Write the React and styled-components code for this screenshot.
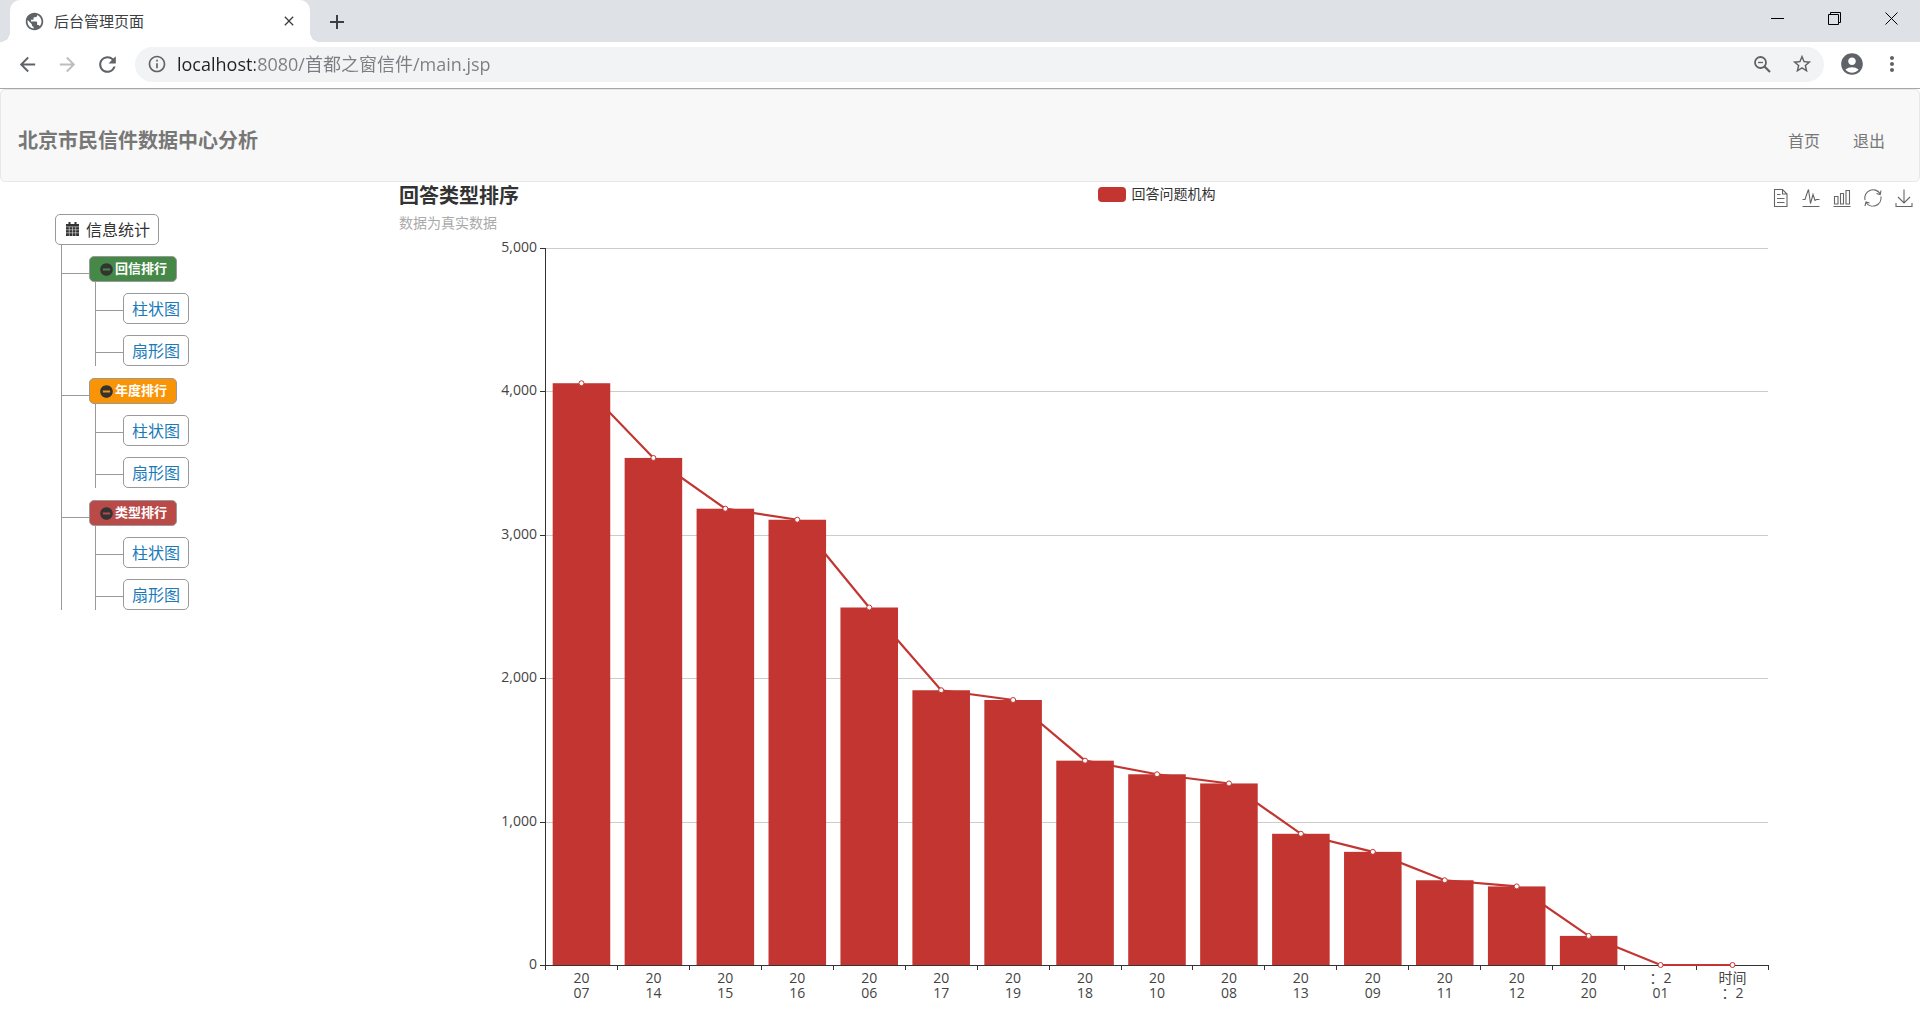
import React, { useEffect, useRef, useState } from 'react';
import styled, { createGlobalStyle } from 'styled-components';
import { FaMinusCircle } from 'react-icons/fa';
import {
  MdArrowBack,
  MdArrowForward,
  MdRefresh,
  MdInfoOutline,
  MdStarBorder,
  MdAccountCircle,
  MdMoreVert,
  MdPublic,
  MdClose,
  MdAdd,
} from 'react-icons/md';

const GlobalStyle = createGlobalStyle`
  * {
    box-sizing: border-box;
  }
  body {
    margin: 0;
    background: #fff;
    color: #333;
    font-family: "Open Sans", "Noto Sans CJK SC", sans-serif;
    font-size: 16px;
  }
  button {
    padding: 0;
    border: 0;
    background: none;
    color: inherit;
    font: inherit;
    cursor: pointer;
  }
`;

const TabStrip = styled.div`
  display: flex;
  align-items: flex-end;
  height: 42px;
  padding-left: 10px;
  background: #dee1e6;
`;

const Tab = styled.div`
  position: relative;
  display: flex;
  align-items: center;
  width: 300px;
  height: 42px;
  padding: 0 13px 0 14px;
  border-radius: 10px 10px 0 0;
  background: #fff;
  color: #3c4043;
  font-size: 15px;

  &::before,
  &::after {
    content: '';
    position: absolute;
    bottom: 0;
    width: 10px;
    height: 10px;
  }
  &::before {
    left: -10px;
    background: radial-gradient(circle at 0 0, transparent 10px, #fff 10px);
  }
  &::after {
    right: -10px;
    background: radial-gradient(circle at 100% 0, transparent 10px, #fff 10px);
  }
`;

const TabTitle = styled.span`
  flex: 1;
  margin-left: 9px;
  padding-bottom: 2px;
`;

const IconButton = styled.button`
  display: flex;
  align-items: center;
  justify-content: center;
  width: ${props => props.$width || 40}px;
  height: 40px;
  color: ${props => props.$color || '#5f6368'};
`;

const WindowButtons = styled.div`
  display: flex;
  align-items: center;
  height: 42px;
  margin-left: auto;
  padding-bottom: 6px;
`;

const Toolbar = styled.div`
  display: flex;
  align-items: center;
  height: 47px;
  padding: 0 8px 2px 7px;
  border-bottom: 1px solid #a6a6a6;
  background: #fff;
`;

const AddressBar = styled.div`
  display: flex;
  flex: 1;
  align-items: center;
  height: 35px;
  margin: 0 8px;
  padding: 0 2px 0 12px;
  border-radius: 18px;
  background: #f1f3f4;
  color: #5f6368;
`;

/* host part is darker than the rest of the address */
const AddressInput = styled.input`
  flex: 1;
  min-width: 0;
  margin-left: 10px;
  padding: 0 0 2px;
  border: 0;
  outline: 0;
  background: linear-gradient(90deg, #202124 78px, #7a7e83 78px);
  background-clip: text;
  -webkit-background-clip: text;
  color: transparent;
  font-family: inherit;
  font-size: 18px;
`;

const Navbar = styled.nav`
  display: flex;
  align-items: center;
  justify-content: space-between;
  height: 93px;
  padding: 8px 34px 0 17px;
  border: 1px solid #e7e7e7;
  border-radius: 5px;
  background: #f8f8f8;
  color: #777;
`;

const Brand = styled.a`
  color: inherit;
  font-size: 20px;
  font-weight: bold;
  text-decoration: none;
`;

const NavLinks = styled.div`
  display: flex;
  gap: 33px;
`;

const NavLink = styled.a`
  color: inherit;
  text-decoration: none;
`;

const Content = styled.main`
  display: grid;
  grid-template-columns: 399px 1fr;
`;

const Sidebar = styled.aside`
  padding: 32px 0 0 55px;
`;

const TreeRoot = styled.button`
  display: flex;
  align-items: center;
  gap: 7px;
  height: 31px;
  padding: 0 8px 2px 10px;
  border: 1px solid #999;
  border-radius: 5px;
`;

const Branch = styled.ul`
  margin: 0 0 0 ${props => props.$indent}px;
  padding: 11px 0 0;
  border-left: 1px solid #999;
  list-style: none;
`;

const Group = styled.li`
  &:not(:last-child) {
    margin-bottom: 12px;
  }
`;

const Row = styled.div`
  display: flex;
  align-items: center;

  &::before {
    content: '';
    width: 27px;
    border-top: 1px solid #999;
    margin-top: ${props => props.$drop}px;
  }
`;

const GroupLabel = styled.button`
  display: flex;
  align-items: center;
  height: 26px;
  padding: 0 9px 0 10px;
  border: 1px solid #999;
  border-radius: 5px;
  background: ${props => props.$color};
  color: #fff;
  font-size: 13px;
  font-weight: bold;

  svg {
    margin-right: 2px;
    color: #333;
  }

  span {
    padding-bottom: 3px;
  }
`;

const Leaf = styled.li`
  padding-bottom: 11px;

  &:last-child {
    padding-bottom: 0;
  }
`;

const LeafLink = styled.a`
  display: flex;
  align-items: center;
  height: 31px;
  padding: 0 8px 2px;
  border: 1px solid #999;
  border-radius: 5px;
  color: #1b7bb9;
  text-decoration: none;
`;

const Panel = styled.section`
  min-width: 0;
`;

const ChartHeader = styled.header`
  display: grid;
  grid-template-columns: 1fr auto 1fr;
  height: 50px;
  padding-right: 6px;
`;

const ChartTitle = styled.h2`
  margin: 0;
  color: #333;
  font-size: 20px;
  line-height: 28px;
`;

const Subtitle = styled.p`
  margin: 0;
  color: #aaa;
  font-size: 14px;
  line-height: 26px;
`;

const Legend = styled.button`
  display: flex;
  align-items: center;
  gap: 6px;
  height: 24px;
  color: #333;
  font-size: 14px;

  span:last-child {
    padding-bottom: 3px;
  }
`;

const Swatch = styled.span`
  width: 28px;
  height: 15px;
  border-radius: 4px;
  background: #c23531;
`;

const Toolbox = styled.div`
  display: flex;
  justify-content: flex-end;
  gap: 11px;
  height: 32px;
`;

const ToolButton = styled.button`
  display: flex;
  align-items: center;
  width: 20px;
`;

const ToolIcon = styled.svg`
  width: 20px;
  height: 20px;
  fill: none;
  stroke: #666;
  stroke-width: 1.1;
`;

const Plot = styled.svg`
  display: block;
  width: 100%;
  height: 778px;
  font-size: 14px;
`;

const groups = [
  { name: '回信排行', color: '#468847' },
  { name: '年度排行', color: '#f89406' },
  { name: '类型排行', color: '#b94a48' },
];

const data = [
  { label: ['20', '07'], value: 4057 },
  { label: ['20', '14'], value: 3536 },
  { label: ['20', '15'], value: 3182 },
  { label: ['20', '16'], value: 3105 },
  { label: ['20', '06'], value: 2493 },
  { label: ['20', '17'], value: 1916 },
  { label: ['20', '19'], value: 1848 },
  { label: ['20', '18'], value: 1425 },
  { label: ['20', '10'], value: 1330 },
  { label: ['20', '08'], value: 1266 },
  { label: ['20', '13'], value: 915 },
  { label: ['20', '09'], value: 789 },
  { label: ['20', '11'], value: 591 },
  { label: ['20', '12'], value: 548 },
  { label: ['20', '20'], value: 203 },
  { label: ['：2', '01'], value: 0 },
  { label: ['时间', '：2'], value: 0 },
];

const tools = [
  { name: '数据视图', path: 'M4.5 1.5H12.5L17 6V18.5H4.5ZM12.5 1.5V6H17M7 6.5H10.5M7 10.5H14.5M7 14.5H14.5' },
  { name: '切换为折线图', path: 'M1.5 11.5H4L6 5.5L7.5 1.5L9.5 15.5L12 6.5L14 12.5L15.5 11.5H18.5M1.5 18.5H18.5' },
  { name: '切换为柱状图', path: 'M2.5 8.5H6V16H2.5ZM8.5 5.5H11.5V16H8.5ZM14 2.5H17.5V16H14ZM1.5 18.5H18.5' },
  { name: '还原', path: 'M2 12A8.3 8.3 0 0 1 17 5.5M18 2.5L17.2 6.5L13.5 5.5M18 8.5A8.3 8.3 0 0 1 3 14.5M2 18L3 14L6.5 15' },
  { name: '保存为图片', path: 'M10 1.5V14.5M4 9L10 15L16 9M2 15V18.5H18V15' },
];

const TOP = 16;
const BASE = 733;
const MAX = 5000;

function Chart() {
  const ref = useRef(null);
  const [width, setWidth] = useState(1521);

  useEffect(() => {
    const observer = new ResizeObserver(([entry]) => setWidth(entry.contentRect.width));
    observer.observe(ref.current);
    return () => observer.disconnect();
  }, []);

  const left = 146;
  const right = width - 152;
  const band = (right - left) / data.length;
  const x = i => left + band * (i + 0.5) + 0.5;
  const y = value => BASE - (value / MAX) * (BASE - TOP);

  return (
    <Plot ref={ref} role="img" aria-label="回答类型排序">
      {[0, 1000, 2000, 3000, 4000, 5000].map(tick => (
        <g key={tick}>
          {tick > 0 && <path d={`M${left} ${Math.round(y(tick)) + 0.5}H${right}`} stroke="#ccc" />}
          <path d={`M${left - 5} ${Math.round(y(tick)) + 0.5}H${left}`} stroke="#333" />
          <text x={left - 8} y={y(tick) + 4} textAnchor="end" fill="#444">
            {tick.toLocaleString('en-US')}
          </text>
        </g>
      ))}
      {data.map((d, i) => (
        <rect key={i} x={x(i) - band * 0.4} y={y(d.value)} width={band * 0.8} height={BASE - y(d.value)} fill="#c23531" />
      ))}
      <path d={`M${left + 0.5} ${TOP}V${BASE + 5}M${left} ${BASE + 0.5}H${right}`} stroke="#333" fill="none" />
      {data.map((d, i) => (
        <g key={i}>
          <path d={`M${Math.round(left + band * (i + 1)) + 0.5} ${BASE}v5`} stroke="#333" />
          <text textAnchor="middle" fill="#444">
            <tspan x={x(i)} y={BASE + 18}>{d.label[0]}</tspan>
            <tspan x={x(i)} y={BASE + 33}>{d.label[1]}</tspan>
          </text>
        </g>
      ))}
      <polyline points={data.map((d, i) => `${x(i)},${y(d.value)}`).join(' ')} fill="none" stroke="#c23531" strokeWidth="2.2" />
      {data.map((d, i) => (
        <circle key={i} cx={x(i)} cy={y(d.value)} r="2.5" fill="#fff" stroke="#c23531" />
      ))}
    </Plot>
  );
}

function Browser() {
  return (
    <header>
      <TabStrip>
        <Tab>
          <MdPublic size={21} color="#5f6368" />
          <TabTitle>后台管理页面</TabTitle>
          <IconButton $width={16} $color="#3c4043" aria-label="关闭标签页">
            <MdClose size={18} />
          </IconButton>
        </Tab>
        <IconButton $width={54} $color="#3c4043" aria-label="新标签页">
          <MdAdd size={24} />
        </IconButton>
        <WindowButtons>
          <IconButton $width={57} $color="#000" aria-label="最小化">
            <svg width="13" height="13" stroke="currentColor"><path d="M0 6.5H13" /></svg>
          </IconButton>
          <IconButton $width={57} $color="#000" aria-label="还原窗口">
            <svg width="13" height="13" fill="none" stroke="currentColor"><path d="M.5 2.5H10.5V12.5H.5ZM2.5 2.5V.5H12.5V10.5H10.5" /></svg>
          </IconButton>
          <IconButton $width={57} $color="#000" aria-label="关闭">
            <svg width="13" height="13" stroke="currentColor"><path d="M.5 .5L12.5 12.5M12.5 .5L.5 12.5" /></svg>
          </IconButton>
        </WindowButtons>
      </TabStrip>
      <Toolbar>
        <IconButton aria-label="后退"><MdArrowBack size={23} /></IconButton>
        <IconButton $color="#bbbdbf" aria-label="前进"><MdArrowForward size={23} /></IconButton>
        <IconButton aria-label="刷新"><MdRefresh size={25} /></IconButton>
        <AddressBar>
          <MdInfoOutline size={20} />
          <AddressInput aria-label="地址" defaultValue="localhost:8080/首都之窗信件/main.jsp" />
          <IconButton aria-label="缩放">
            <svg width="17" height="17" fill="none" stroke="currentColor">
              <circle cx="6.5" cy="6.5" r="5.5" strokeWidth="1.8" />
              <path d="M10.5 10.5L16 16" strokeWidth="2.2" />
              <path d="M4 6.5H9" strokeWidth="1.3" />
            </svg>
          </IconButton>
          <IconButton aria-label="收藏"><MdStarBorder size={22} /></IconButton>
        </AddressBar>
        <IconButton aria-label="用户"><MdAccountCircle size={26} /></IconButton>
        <IconButton aria-label="菜单"><MdMoreVert size={24} /></IconButton>
      </Toolbar>
    </header>
  );
}

export default function App() {
  return (
    <>
      <GlobalStyle />
      <Browser />
      <Navbar>
        <Brand href="#">北京市民信件数据中心分析</Brand>
        <NavLinks>
          <NavLink href="#">首页</NavLink>
          <NavLink href="#">退出</NavLink>
        </NavLinks>
      </Navbar>
      <Content>
        <Sidebar>
          <TreeRoot>
            <svg width="13" height="14" stroke="#fff" strokeWidth="0.5">
              <path d="M0 2H2.5V0H4.5V2H8.5V0H10.5V2H13V14H0Z" fill="#333" stroke="none" />
              <path d="M0 4.8H13M0 7.8H13M0 10.8H13M3.3 5V14M6.5 5V14M9.7 5V14" />
            </svg>
            信息统计
          </TreeRoot>
          <Branch $indent={6}>
            {groups.map(group => (
              <Group key={group.name}>
                <Row $drop={8}>
                  <GroupLabel $color={group.color}>
                    <FaMinusCircle size={13} />
                    <span>{group.name}</span>
                  </GroupLabel>
                </Row>
                <Branch $indent={33}>
                  {['柱状图', '扇形图'].map(name => (
                    <Leaf key={name}>
                      <Row $drop={3}>
                        <LeafLink href="#">{name}</LeafLink>
                      </Row>
                    </Leaf>
                  ))}
                </Branch>
              </Group>
            ))}
          </Branch>
        </Sidebar>
        <Panel>
          <ChartHeader>
            <div>
              <ChartTitle>回答类型排序</ChartTitle>
              <Subtitle>数据为真实数据</Subtitle>
            </div>
            <Legend>
              <Swatch />
              <span>回答问题机构</span>
            </Legend>
            <Toolbox>
              {tools.map(tool => (
                <ToolButton key={tool.name} aria-label={tool.name}>
                  <ToolIcon viewBox="0 0 20 20">
                    <path d={tool.path} />
                  </ToolIcon>
                </ToolButton>
              ))}
            </Toolbox>
          </ChartHeader>
          <Chart />
        </Panel>
      </Content>
    </>
  );
}
